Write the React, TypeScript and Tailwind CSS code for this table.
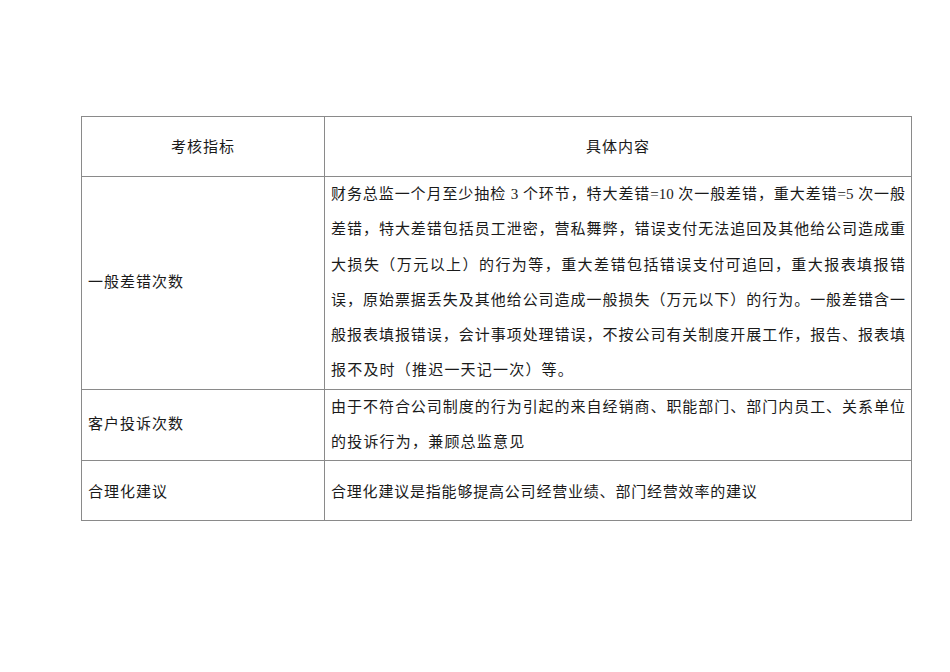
const font = { fontFamily: '"Liberation Serif", "Noto Sans CJK SC", serif' };

const row1Lines = [
  '财务总监一个月至少抽检 3 个环节，特大差错=10 次一般差错，重大差错=5 次一般',
  '差错，特大差错包括员工泄密，营私舞弊，错误支付无法追回及其他给公司造成重',
  '大损失（万元以上）的行为等，重大差错包括错误支付可追回，重大报表填报错',
  '误，原始票据丢失及其他给公司造成一般损失（万元以下）的行为。一般差错含一',
  '般报表填报错误，会计事项处理错误，不按公司有关制度开展工作，报告、报表填',
  '报不及时（推迟一天记一次）等。',
];

const row2Lines = [
  '由于不符合公司制度的行为引起的来自经销商、职能部门、部门内员工、关系单位',
  '的投诉行为，兼顾总监意见',
];

function Lines({ lines }: { lines: string[] }) {
  return (
    <>
      {lines.map((l, i) => (
        <div
          key={i}
          className={
            i < lines.length - 1
              ? 'whitespace-nowrap text-justify [text-align-last:justify]'
              : 'text-left tracking-[1.2px]'
          }
        >
          {l}
        </div>
      ))}
    </>
  );
}

export default function App() {
  return (
    <div className="min-h-[672px] w-[950px] bg-white pt-[116px] pl-[81px]" style={font}>
      <table className="w-[830px] table-fixed border-collapse text-[15px] leading-[35.3px] text-[#1a1a1a]">
        <colgroup>
          <col className="w-[243px]" />
          <col className="w-[587px]" />
        </colgroup>
        <tbody>
          <tr className="h-[60px]">
            <td className="border border-[#8a8a8a] text-center align-middle pt-[2px] tracking-[1px]">考核指标</td>
            <td className="border border-[#8a8a8a] text-center align-middle pt-[2px] tracking-[1px]">具体内容</td>
          </tr>
          <tr className="h-[212px]">
            <td className="border border-[#8a8a8a] px-[6px] align-middle tracking-[1px]">一般差错次数</td>
            <td className="border border-[#8a8a8a] px-[6px] align-middle">
              <Lines lines={row1Lines} />
            </td>
          </tr>
          <tr className="h-[70px]">
            <td className="border border-[#8a8a8a] px-[6px] align-middle tracking-[1px]">客户投诉次数</td>
            <td className="border border-[#8a8a8a] px-[6px] align-middle">
              <Lines lines={row2Lines} />
            </td>
          </tr>
          <tr className="h-[60px]">
            <td className="border border-[#8a8a8a] px-[6px] align-middle pt-[3px] tracking-[1px]">合理化建议</td>
            <td className="border border-[#8a8a8a] px-[6px] align-middle pt-[3px] tracking-[0.8px]">
              合理化建议是指能够提高公司经营业绩、部门经营效率的建议
            </td>
          </tr>
        </tbody>
      </table>
    </div>
  );
}
